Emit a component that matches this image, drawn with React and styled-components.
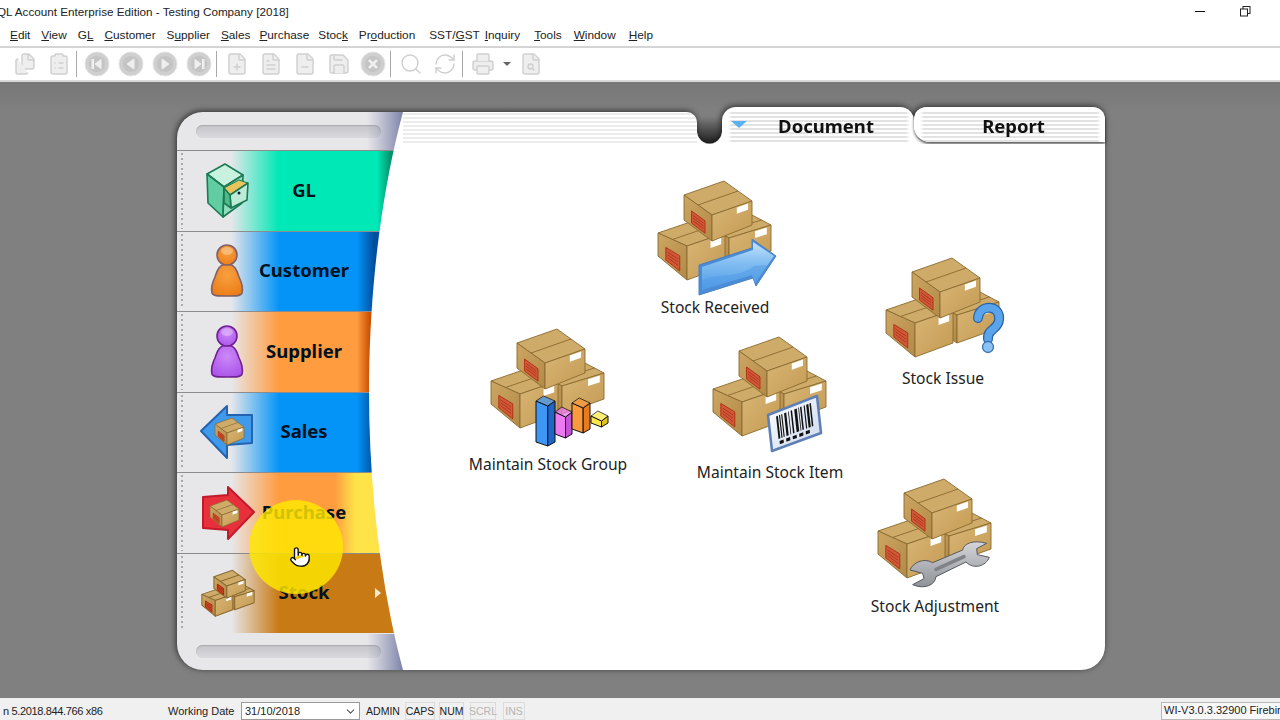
import styled, { createGlobalStyle } from 'styled-components'
import { Files, ClipboardList, FilePlus, FileText, FileMinus, Save, Search, RefreshCw, Printer, FileSearch, Pointer, ChevronDown } from 'lucide-react'

const GlobalStyle = createGlobalStyle`
  html, body {
    margin: 0;
    height: 100%;
    overflow: hidden;
  }
  body {
    font-family: 'Liberation Sans', Arial, sans-serif;
    font-size: 12px;
    color: #222;
    background: #fff;
  }
`

const Page = styled.div`
  display: flex;
  flex-direction: column;
  width: 1280px;
  height: 720px;
`

const TitleBar = styled.div`
  display: flex;
  align-items: center;
  justify-content: space-between;
  box-sizing: border-box;
  height: 24px;
  padding-bottom: 2px;
  flex-shrink: 0;
  background: #fff;
  overflow: hidden;
`

const TitleText = styled.span`
  margin-left: -3px;
  font-size: 11.7px;
  white-space: nowrap;
`

const WindowButtons = styled.div`
  display: flex;
  align-items: center;
  gap: 34px;
  margin-right: 29px;
`

const MenuBar = styled.nav`
  display: flex;
  align-items: center;
  gap: 11px;
  box-sizing: border-box;
  height: 24px;
  padding: 0 0 1px 10px;
  flex-shrink: 0;
  background: #fff;
  border-bottom: 2px solid #d4d4d4;
  font-size: 11.8px;
`

const MenuItem = styled.span`
  margin-left: ${p => p.$nudge || 0}px;
  white-space: nowrap;
  & u {
    text-decoration: underline;
    text-underline-offset: 1px;
  }
`

const Toolbar = styled.div`
  display: flex;
  align-items: center;
  height: 32px;
  padding-left: 8px;
  flex-shrink: 0;
  background: #fff;
  border-bottom: 2px solid #d8d8d8;
`

const Tool = styled.span`
  display: flex;
  align-items: center;
  justify-content: center;
  width: ${p => p.$w || 34}px;
  height: 30px;
  color: #cfcfcf;
`

const ToolSep = styled.span`
  width: 1px;
  height: 26px;
  margin-right: 3px;
  background: #a8a8a8;
`

const Desktop = styled.main`
  flex: 1;
  min-height: 0;
  padding: 25px 175px 28px 177px;
  background: linear-gradient(#777 0, #808080 30px);
`

const Panel = styled.div`
  position: relative;
  display: grid;
  grid-template-columns: 226px 1fr;
  height: 563px;
  filter: drop-shadow(-1px -1px 3px rgba(0, 0, 0, 0.65));
`

const Sidebar = styled.aside`
  display: flex;
  flex-direction: column;
  margin-top: 5px;
  background: #e7e7ea;
  border-radius: 26px 0 0 26px;
  overflow: hidden;
`

const SideCap = styled.div`
  display: flex;
  align-items: center;
  height: ${p => p.$h}px;
  padding-left: 19px;
  flex-shrink: 0;
`

const Groove = styled.div`
  width: 185px;
  height: 13px;
  border-radius: 7px;
  background: linear-gradient(#c4c4ca, #dadade);
  box-shadow: inset 0 1px 1px #aaa;
`

const SideRow = styled.div`
  position: relative;
  flex: 1;
  display: grid;
  grid-template-columns: 62px 90px;
  justify-items: center;
  align-items: center;
  padding-left: 20px;
  border-top: 1px solid #8c8c8c;
  background: linear-gradient(
    90deg,
    #e7e7ea 0,
    #e7e7ea 54px,
    ${p => p.$color} 102px,
    ${p => p.$color} ${p => p.$hold || 226}px,
    ${p => p.$end || p.$color} ${p => p.$stop || 226}px
  );

  &::before {
    content: '';
    position: absolute;
    left: 4px;
    top: 2px;
    bottom: 2px;
    width: 2px;
    background: repeating-linear-gradient(#aaa 0 2px, transparent 2px 5px);
  }

  &:last-of-type {
    border-bottom: 1px solid #111;
  }
`

const SideLabel = styled.span`
  display: flex;
  justify-content: center;
  width: 90px;
  padding-bottom: 3px;
  font-family: 'Noto Sans', sans-serif;
  font-size: 18.5px;
  font-weight: 700;
  color: #00101c;
  white-space: nowrap;
`

const RowArrow = styled.span`
  position: absolute;
  right: 22px;
  top: 50%;
  margin-top: -5px;
  border-left: 6px solid #f4ead8;
  border-top: 5px solid transparent;
  border-bottom: 5px solid transparent;
`

const Main = styled.section`
  display: flex;
  flex-direction: column;
  min-width: 0;
`

const TabRow = styled.div`
  display: flex;
  height: 37px;
  flex-shrink: 0;
`

const Strip = styled.div`
  width: 294px;
  margin-top: 5px;
  border-radius: 0 10px 0 0;
  background:
    linear-gradient(#fff0 0, #fff0 31px, #fff 31px),
    repeating-linear-gradient(#fff 0 1px, #ececec 1px 3px, #fff 3px 4px);
`

const Notch = styled.div`
  position: relative;
  width: 25px;
  background: radial-gradient(circle at 50% 0, transparent 12px, #fff 12.5px) bottom / 100% 13px no-repeat;

  &::before {
    content: '';
    position: absolute;
    inset: 0;
    border-radius: 0 0 12.5px 12.5px;
    background: linear-gradient(transparent 10px, rgba(0, 0, 0, 0.55));
  }
`

const Tab = styled.div`
  position: relative;
  display: flex;
  align-items: center;
  justify-content: center;
  width: ${p => p.$w}px;
  height: ${p => (p.$active ? 37 : 35)}px;
  padding-left: ${p => (p.$active ? 16 : 8)}px;
  padding-top: ${p => (p.$active ? 0 : 2)}px;
  box-sizing: border-box;
  border-radius: ${p => (p.$active ? '14px 14px 0 0' : '12px 12px 0 16px')};
  font-family: 'Noto Sans', sans-serif;
  font-size: 18.5px;
  font-weight: 700;
  color: #111;
  background:
    linear-gradient(90deg, #fff 6px, #fff0 10px, #fff0 calc(100% - 8px), #fff calc(100% - 4px)),
    linear-gradient(#fff 5px, #fff0 5px),
    repeating-linear-gradient(#fff 0 1px, #e2e2e2 1px 3px, #fff 3px 4px);
  box-shadow: ${p => (p.$active ? 'none' : '0 2px 3px rgba(0,0,0,0.65)')};
`

const ReportSlot = styled.div`
  width: 191px;
  background: linear-gradient(transparent 20px, #fff 20px);
`

const TabMark = styled.span`
  position: absolute;
  left: 9px;
  top: 14px;
  border-top: 7px solid #5cb2f0;
  border-left: 8px solid transparent;
  border-right: 8px solid transparent;
`

const Canvas = styled.div`
  position: relative;
  flex: 1;
  background: #fff;
  border-radius: 0 0 24px 0;
`

const Launcher = styled.div`
  position: absolute;
  left: ${p => p.$x}px;
  top: ${p => p.$y}px;
  display: flex;
  flex-direction: column;
  align-items: center;
  width: 150px;
`

const LauncherArt = styled.svg`
  display: block;
  width: 150px;
  height: 120px;
  overflow: visible;
`

const LauncherLabel = styled.span`
  margin-top: ${p => p.$gap}px;
  font-family: 'Noto Sans', sans-serif;
  font-size: 15.6px;
  line-height: 20px;
  color: #222;
  white-space: nowrap;
`

const CurveOverlay = styled.svg`
  position: absolute;
  left: 0;
  top: 0;
  width: 226px;
  height: 563px;
  pointer-events: none;
`

const Highlight = styled.div`
  position: absolute;
  left: 72px;
  top: 393px;
  width: 94px;
  height: 94px;
  border-radius: 50%;
  background: radial-gradient(rgba(255, 232, 0, 0.82) 84%, rgba(255, 232, 0, 0.25) 100%);
`

const HandCursor = styled.span`
  position: absolute;
  left: 112px;
  top: 439px;
  display: flex;
`

const StatusBar = styled.footer`
  display: flex;
  align-items: center;
  box-sizing: border-box;
  height: 22px;
  flex-shrink: 0;
  padding: 4px 0 0 3px;
  background: #f0f0f0;
  font-size: 11px;
`

const StatusText = styled.span`
  width: ${p => p.$w}px;
  flex-shrink: 0;
  letter-spacing: ${p => p.$tight || 0}px;
  white-space: nowrap;
`

const DateBox = styled.div`
  display: flex;
  align-items: center;
  justify-content: space-between;
  box-sizing: border-box;
  width: 119px;
  height: 18px;
  margin-right: 6px;
  padding: 0 2px 0 3px;
  background: #fff;
  border: 1px solid #9a9a9a;
`

const Indicator = styled.span`
  display: flex;
  align-items: center;
  justify-content: center;
  box-sizing: border-box;
  width: ${p => p.$w}px;
  height: 18px;
  margin-right: ${p => p.$gap}px;
  border: ${p => (p.$plain ? 'none' : '1px solid #dcdcdc')};
  color: ${p => (p.$off ? '#b5b5b5' : '#222')};
  font-size: 10.5px;
`

const EngineBox = styled.div`
  box-sizing: border-box;
  width: 119px;
  height: 18px;
  margin-left: auto;
  padding: 1px 0 0 2px;
  background: #f8f8f8;
  border: 1px solid #b8b8b8;
  border-right: none;
  font-size: 11px;
  white-space: nowrap;
  overflow: hidden;
`

const poly = pts => pts.map(p => p.join(',')).join(' ')
const mix = (a, b, t) => [a[0] + (b[0] - a[0]) * t, a[1] + (b[1] - a[1]) * t]
const inQuad = (q, u, v) => mix(mix(q[0], q[1], u), mix(q[3], q[2], u), v)
const patch = (q, u1, u2, v1, v2) => [inQuad(q, u1, v1), inQuad(q, u2, v1), inQuad(q, u2, v2), inQuad(q, u1, v2)]

function ArtDefs() {
  return (
    <defs>
      <linearGradient id="boxLeft" x1="0" y1="0" x2="1" y2="1">
        <stop offset="0" stopColor="#cca662" />
        <stop offset="1" stopColor="#b08a46" />
      </linearGradient>
      <linearGradient id="boxRight" x1="0" y1="0" x2="1" y2="1">
        <stop offset="0" stopColor="#d9b676" />
        <stop offset="1" stopColor="#c39a52" />
      </linearGradient>
      <linearGradient id="blueFill" x1="0" y1="0" x2="0" y2="1">
        <stop offset="0" stopColor="#c4e3fb" />
        <stop offset="0.4" stopColor="#86c0f3" />
        <stop offset="1" stopColor="#4f9ae6" />
      </linearGradient>
      <linearGradient id="steel" x1="0" y1="0" x2="0" y2="1">
        <stop offset="0" stopColor="#d4d6da" />
        <stop offset="1" stopColor="#8f9297" />
      </linearGradient>
      <linearGradient id="card" x1="0" y1="0" x2="1" y2="1">
        <stop offset="0" stopColor="#ffffff" />
        <stop offset="1" stopColor="#c9d8ee" />
      </linearGradient>
    </defs>
  )
}

function Box({ L, C, R, hL, hC, hR, sw = 0.9 }) {
  const T = [L[0] + R[0] - C[0], L[1] + R[1] - C[1]]
  const LB = [L[0], L[1] + hL]
  const B = [C[0], C[1] + hC]
  const RB = [R[0], R[1] + hR]
  const left = [L, C, B, LB]
  const right = [C, R, RB, B]
  const label = patch(left, 0.27, 0.75, 0.42, 0.9)
  return (
    <g stroke="#8a6a30" strokeWidth={sw} strokeLinejoin="round">
      <polygon points={poly([L, T, R, C])} fill="#cfab69" />
      <polygon points={poly(left)} fill="url(#boxLeft)" />
      <polygon points={poly(right)} fill="url(#boxRight)" />
      <line x1={mix(L, C, 0.5)[0]} y1={mix(L, C, 0.5)[1]} x2={mix(T, R, 0.5)[0]} y2={mix(T, R, 0.5)[1]} stroke="#8a6a30" />
      <polygon points={poly(label)} fill="#cf5a3a" stroke="#b02a10" />
      {[0.28, 0.5, 0.72].map(v => {
        const a = inQuad(label, 0.12, v)
        const b = inQuad(label, 0.88, v)
        return <line key={v} x1={a[0]} y1={a[1]} x2={b[0]} y2={b[1]} stroke="#a82408" strokeWidth={sw * 0.8} />
      })}
      <polygon points={poly(patch(right, 0.62, 0.9, 0.05, 0.3))} fill="#fff" stroke="none" />
    </g>
  )
}

function Pile({ sw }) {
  return (
    <>
      <Box L={[70, 58]} C={[89, 68]} R={[131, 55]} hL={25} hC={28} hR={26} sw={sw} />
      <Box L={[18, 63]} C={[47, 76]} R={[85, 63]} hL={23} hC={34} hR={33} sw={sw} />
      <Box L={[44, 25]} C={[72, 45]} R={[112, 31]} hL={25} hC={26} hR={24} sw={sw} />
    </>
  )
}

function ArrowBadge() {
  return (
    <g strokeLinejoin="round">
      <polygon points="59,95 112,78 112,69 136,86 116,116 113,108 59,125" fill="#4a8cd6" stroke="#4a80c0" />
      <polygon points="62,97 113,80 113,72 134,86 115,113 112,105 62,120" fill="url(#blueFill)" />
      <path d="M62 110 C80 102 95 110 114 96 L128 95 L115 113 L112 105 L62 120 Z" fill="#4f9ae6" opacity="0.5" />
    </g>
  )
}

function QuestionBadge() {
  return (
    <g fill="none" strokeLinecap="round">
      <path d="M110 71 C111 57 133 57 131 73 C130 83 119 82 120 92" stroke="#2a62a8" strokeWidth="10" />
      <path d="M110 71 C111 57 133 57 131 73 C130 83 119 82 120 92" stroke="#5aa4ec" strokeWidth="7.5" />
      <circle cx="120" cy="100" r="5.5" fill="#8cc2f2" stroke="#3a70b4" strokeWidth="1.3" />
    </g>
  )
}

function Bar({ x, y, w, h, color, dark }) {
  const A = [x, y + 3]
  const D = [x + 0.62 * w, y + 8]
  const C = [x + w, y + 3]
  const E = [x + 0.4 * w, y - 2]
  return (
    <g stroke="#111" strokeWidth="1" strokeLinejoin="round">
      <polygon points={poly([A, D, [D[0], y + h], [x, y + h - 4]])} fill={color} />
      <polygon points={poly([D, C, [x + w, y + h - 4], [D[0], y + h]])} fill={dark} />
      <polygon points={poly([A, E, C, D])} fill={color} opacity="0.75" />
    </g>
  )
}

function ChartBadge() {
  return (
    <>
      <Bar x={63} y={80} w={19} h={48} color="#3f97f5" dark="#1f66c8" />
      <Bar x={82} y={91} w={17} h={29} color="#ee7af2" dark="#c553d8" />
      <Bar x={99} y={82} w={18} h={33} color="#fb9a3c" dark="#ea7a1c" />
      <Bar x={118} y={95} w={17} h={14} color="#fbe74a" dark="#dfc21c" />
    </>
  )
}

const barcodeBars = [[0.02, 0.05], [0.1, 0.03], [0.16, 0.03], [0.24, 0.06], [0.35, 0.02], [0.42, 0.04], [0.52, 0.07], [0.63, 0.02], [0.68, 0.04], [0.78, 0.03], [0.85, 0.06], [0.94, 0.04]]
const barcodeDashes = [0.04, 0.22, 0.4, 0.58, 0.76]

function BarcodeBadge() {
  const card = [[73, 89], [122, 70], [126, 107], [77, 125]]
  const inner = patch(card, 0.14, 0.88, 0.12, 0.92)
  return (
    <g>
      <polygon points={poly(card)} fill="url(#card)" stroke="#5d7fb6" strokeWidth="2.5" strokeLinejoin="round" />
      {barcodeBars.map(([u, w]) => (
        <polygon key={u} points={poly(patch(inner, u, u + w, 0, 0.78))} fill="#111" />
      ))}
      {barcodeDashes.map(u => (
        <polygon key={u} points={poly(patch(inner, u, u + 0.11, 0.86, 0.97))} fill="#111" />
      ))}
    </g>
  )
}

function WrenchBadge() {
  return (
    <g transform="translate(0 2) scale(0.3333)">
      <path
        d="M150 300 C158 278 192 262 218 278 L308 240 C310 222 338 208 380 220 L350 236 L352 254 L388 262 C378 288 342 300 318 276 L228 320 C226 344 195 360 158 344 L192 326 L188 310 Z"
        fill="url(#steel)"
        stroke="#55585c"
        strokeWidth="3"
        strokeLinejoin="round"
      />
      <path d="M228 298 L312 260" stroke="#7f8287" strokeWidth="11" strokeLinecap="round" />
    </g>
  )
}

function Cabinet() {
  return (
    <svg width="44" height="56" viewBox="0 0 44 56">
      <g stroke="#1b7a54" strokeWidth="1.6" strokeLinejoin="round">
        <polygon points="19,1 1,11 18,24 37,12" fill="#c9f1e0" />
        <polygon points="1,11 18,24 17,54 2,40" fill="#62cda0" />
        <polygon points="18,24 37,12 36,40 17,54" fill="#8fdcbc" />
        <polygon points="18,25 33,17 42,20 24,32" fill="#e8c45a" strokeWidth="1" />
        <polygon points="24,32 42,20 41,37 25,45" fill="#bcecd6" />
        <polygon points="18,25 24,32 25,45 18,40" fill="#4fb98c" />
      </g>
      <circle cx="33" cy="30" r="1.5" fill="#123" />
    </svg>
  )
}

function Person({ id, light, main, line }) {
  return (
    <svg width="38" height="60" viewBox="0 0 38 60">
      <defs>
        <radialGradient id={id} cx="0.5" cy="0.35" r="0.75">
          <stop offset="0" stopColor={light} />
          <stop offset="1" stopColor={main} />
        </radialGradient>
      </defs>
      <g fill={`url(#${id})`} stroke={line} strokeWidth="1.6">
        <path d="M18 23 C10 23 8 30 6 36 C3 42 2 48 3 52 C4 55 8 55 18 55 C28 55 32 55 33 52 C34 48 33 42 30 36 C28 30 26 23 18 23 Z" />
        <circle cx="18" cy="14" r="10" />
      </g>
      <ellipse cx="18" cy="10" rx="6" ry="4" fill="#fff" opacity="0.3" />
    </svg>
  )
}

function ArrowIcon({ points, fill, line }) {
  const mini = points === 'left'
    ? { L: [16, 21], C: [28, 30], R: [45, 24] }
    : { L: [11, 22], C: [23, 31], R: [40, 25] }
  const shape = points === 'left'
    ? '2,28 28,3 28,12 53,12 53,40 28,42 28,55'
    : '55,28 29,3 29,11 4,13 4,44 29,46 29,55'
  return (
    <svg width="58" height="58" viewBox="0 0 58 58">
      <ArtDefs />
      <polygon points={shape} fill={fill} stroke={line} strokeWidth="2" strokeLinejoin="round" />
      <Box {...mini} hL={11} hC={12} hR={11} sw={0.7} />
    </svg>
  )
}

function MiniPile() {
  return (
    <svg width="58" height="50" viewBox="12 6 125 108">
      <ArtDefs />
      <Pile sw={2.2} />
    </svg>
  )
}

const sideItems = [
  { label: 'GL', color: '#00e8b6', hold: 200, end: '#00906a', stop: 214, icon: <Cabinet /> },
  { label: 'Customer', color: '#0494f8', hold: 180, end: '#004f9e', stop: 197, icon: <Person id="orangeMan" light="#f8a040" main="#ea7a14" line="#80606a" /> },
  { label: 'Supplier', color: '#ff9c40', hold: 180, end: '#c85000', stop: 193, icon: <Person id="purpleMan" light="#cc88f8" main="#a850e8" line="#702090" /> },
  { label: 'Sales', color: '#0494f8', hold: 180, end: '#004f9e', stop: 197, icon: <ArrowIcon points="left" fill="#3f9aec" line="#2463b0" /> },
  { label: 'Purchase', color: '#ff9c40', hold: 158, end: '#ffe348', stop: 178, icon: <ArrowIcon points="right" fill="#e8303c" line="#c21a2a" /> },
  { label: 'Stock', color: '#c87a14', icon: <MiniPile />, arrow: true },
]

const launchers = [
  { label: 'Stock Received', x: 237, y: 26, gap: 7, badge: <ArrowBadge /> },
  { label: 'Stock Issue', x: 465, y: 103, gap: 1, badge: <QuestionBadge /> },
  { label: 'Maintain Stock Group', x: 70, y: 174, gap: 16, badge: <ChartBadge /> },
  { label: 'Maintain Stock Item', x: 292, y: 182, gap: 16, badge: <BarcodeBadge /> },
  { label: 'Stock Adjustment', x: 457, y: 324, gap: 8, badge: <WrenchBadge /> },
]

// prefix, accelerator letter, suffix, nudge to keep the original menu spacing
const menus = [
  ['', 'E', 'dit'], ['', 'V', 'iew'], ['G', 'L', ''], ['', 'C', 'ustomer'], ['S', 'u', 'pplier'], ['', 'S', 'ales'], ['', 'P', 'urchase', -2],
  ['Stoc', 'k', '', -2], ['Pr', 'o', 'duction'], ['SST/', 'G', 'ST', 3], ['', 'I', 'nquiry', -6], ['', 'T', 'ools', 3], ['', 'W', 'indow', 1], ['', 'H', 'elp', 2],
]

function NavCircle({ children }) {
  return (
    <svg width="26" height="26" viewBox="0 0 26 26">
      <circle cx="13" cy="13" r="12" fill="#cfcfcf" stroke="#e4e4e4" />
      <circle cx="13" cy="13" r="8" fill="#c4c4c4" />
      <g fill="#efefef" stroke="#efefef" strokeWidth="1">{children}</g>
    </svg>
  )
}

const toolIcon = { size: 24, strokeWidth: 1.4, fill: '#eeeeee' }

export default function App() {
  return (
    <>
      <GlobalStyle />
      <Page>
        <TitleBar>
          <TitleText>QL Account Enterprise Edition - Testing Company [2018]</TitleText>
          <WindowButtons>
            <svg width="11" height="11" viewBox="0 0 11 11"><line x1="0" y1="5.5" x2="10" y2="5.5" stroke="#111" /></svg>
            <svg width="11" height="11" viewBox="0 0 11 11" fill="#fff" stroke="#222"><rect x="3" y="0.5" width="7" height="7" /><rect x="0.5" y="3" width="7" height="7" /></svg>
          </WindowButtons>
        </TitleBar>
        <MenuBar>
          {menus.map(([a, k, b, nudge]) => (
            <MenuItem key={a + k + b} $nudge={nudge}>{a}<u>{k}</u>{b}</MenuItem>
          ))}
        </MenuBar>
        <Toolbar>
          <Tool><Files {...toolIcon} /></Tool>
          <Tool><ClipboardList {...toolIcon} /></Tool>
          <ToolSep />
          <Tool><NavCircle><rect x="8" y="8.5" width="1.5" height="9" /><polygon points="17,8.5 17,17.5 11,13" /></NavCircle></Tool>
          <Tool><NavCircle><polygon points="16,8 16,18 9,13" /></NavCircle></Tool>
          <Tool><NavCircle><polygon points="10,8 10,18 17,13" /></NavCircle></Tool>
          <Tool><NavCircle><polygon points="9,8.5 9,17.5 15,13" /><rect x="16.5" y="8.5" width="1.5" height="9" /></NavCircle></Tool>
          <ToolSep />
          <Tool><FilePlus {...toolIcon} /></Tool>
          <Tool><FileText {...toolIcon} /></Tool>
          <Tool><FileMinus {...toolIcon} /></Tool>
          <Tool><Save {...toolIcon} /></Tool>
          <Tool><NavCircle><path d="M9 9 L17 17 M17 9 L9 17" strokeWidth="2.5" /></NavCircle></Tool>
          <ToolSep />
          <Tool><Search {...toolIcon} fill="none" /></Tool>
          <Tool><RefreshCw {...toolIcon} fill="none" /></Tool>
          <ToolSep />
          <Tool><Printer {...toolIcon} /></Tool>
          <Tool $w={14}>
            <svg width="8" height="4" viewBox="0 0 8 4"><polygon points="0,0 8,0 4,4" fill="#666" /></svg>
          </Tool>
          <Tool><FileSearch {...toolIcon} /></Tool>
        </Toolbar>
        <Desktop>
          <Panel>
            <Sidebar>
              <SideCap $h={38}><Groove /></SideCap>
              {sideItems.map(item => (
                <SideRow key={item.label} $color={item.color} $hold={item.hold} $end={item.end} $stop={item.stop}>
                  {item.icon}
                  <SideLabel>{item.label}</SideLabel>
                  {item.arrow && <RowArrow />}
                </SideRow>
              ))}
              <SideCap $h={37}><Groove /></SideCap>
            </Sidebar>
            <Main>
              <TabRow>
                <Strip />
                <Notch />
                <Tab $w={192} $active>
                  <TabMark />
                  Document
                </Tab>
                <ReportSlot>
                  <Tab $w={191}>Report</Tab>
                </ReportSlot>
              </TabRow>
              <Canvas>
                {launchers.map(item => (
                  <Launcher key={item.label} $x={item.x} $y={item.y}>
                    <LauncherArt viewBox="0 0 150 120">
                      <ArtDefs />
                      <Pile />
                      {item.badge}
                    </LauncherArt>
                    <LauncherLabel $gap={item.gap}>{item.label}</LauncherLabel>
                  </Launcher>
                ))}
              </Canvas>
            </Main>
            <CurveOverlay viewBox="0 0 226 563">
              <defs>
                <linearGradient id="edgeShade" x1="0" y1="0" x2="1" y2="0">
                  <stop offset="0" stopColor="#8a90b0" stopOpacity="0" />
                  <stop offset="1" stopColor="#7c83a8" />
                </linearGradient>
              </defs>
              <polygon points="190,5 226,5 226,43 190,43" fill="url(#edgeShade)" />
              <polygon points="190,527 226,527 226,563 190,563" fill="url(#edgeShade)" />
              <path d="M226 5 C203 90 192 190 192 284 C192 378 203 478 226 563 Z" fill="#fff" />
            </CurveOverlay>
            <Highlight />
            <HandCursor><Pointer size={22} fill="#fff" color="#111" strokeWidth={1.5} /></HandCursor>
          </Panel>
        </Desktop>
        <StatusBar>
          <StatusText $w={165} $tight={-0.35}>n 5.2018.844.766 x86</StatusText>
          <StatusText $w={73}>Working Date</StatusText>
          <DateBox>31/10/2018<ChevronDown size={13} color="#555" /></DateBox>
          <Indicator $w={34} $gap={5} $plain>ADMIN</Indicator>
          <Indicator $w={30} $gap={4}>CAPS</Indicator>
          <Indicator $w={25} $gap={6}>NUM</Indicator>
          <Indicator $w={26} $gap={7} $off>SCRL</Indicator>
          <Indicator $w={22} $gap={0} $off>INS</Indicator>
          <EngineBox>WI-V3.0.3.32900 Firebird</EngineBox>
        </StatusBar>
      </Page>
    </>
  )
}
